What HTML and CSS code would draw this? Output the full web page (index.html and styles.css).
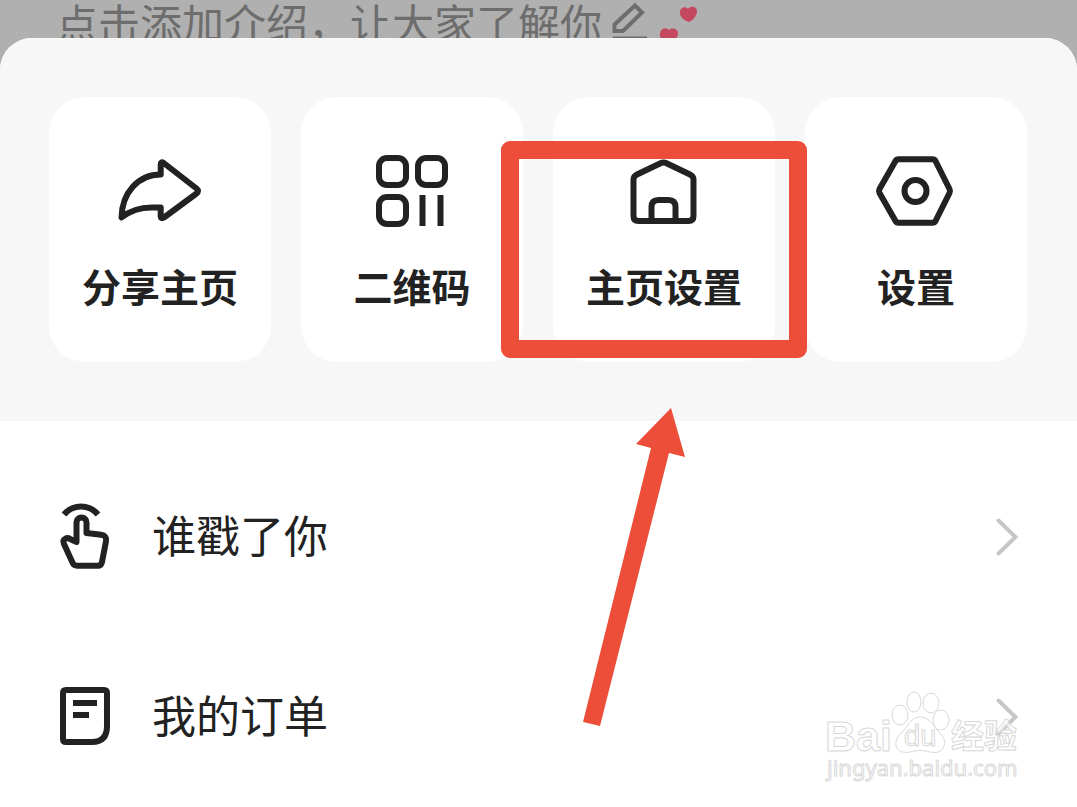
FILE: index.html
```html
<!DOCTYPE html>
<html lang="zh-CN">
<head>
<meta charset="utf-8">
<meta name="viewport" content="width=device-width, initial-scale=1">
<title>主页设置</title>
<link rel="stylesheet" href="styles.css">
</head>
<body>
<header class="intro">
  <span class="intro-text">点击添加介绍，让大家了解你</span>
  <svg class="intro-icons" viewBox="0 0 92 44" aria-hidden="true">
    <path class="pencil" d="M4.500 24.500 25 5.500 32 12.500 13 31H4.500Z"/>
    <path class="pencil" d="M3 38.500H37"/>
    <path class="heart" d="M79 22c-6-2-10-6-9-11 1-4 6-5 8-2 3-4 9-2 9 2 0 5-4 9-8 11z"/>
    <path class="heart" d="M59 44c-6-2-10-6-9-11 1-5 6-6 9-3 3-3 9-1 9 3 0 5-4 9-9 11z"/>
  </svg>
</header>
<main class="sheet">
  <ul class="cards">
    <li class="card-item">
      <button class="card" type="button">
        <svg class="card-icon" viewBox="0 0 88 72" aria-hidden="true">
          <path d="M44.700 19.500V9.500q0-3.500 3-1.500L80.500 33.500q3 2.500 0 5L48 62.500q-3.300 2-3.300-1.500V52.500H38C25 52 15 55 5.500 62.500 6 38 22 19.500 44.700 19.500Z"/>
        </svg>
        <span class="card-label">分享主页</span>
      </button>
    </li>
    <li class="card-item">
      <button class="card" type="button">
        <svg class="card-icon" viewBox="0 0 88 72" aria-hidden="true">
          <rect x="11" y="3" width="27" height="27" rx="8"/>
          <rect x="50" y="3" width="27" height="27" rx="8"/>
          <rect x="11" y="42" width="27" height="27" rx="8"/>
          <path d="M54.500 40V71M72.500 40V71"/>
        </svg>
        <span class="card-label">二维码</span>
      </button>
    </li>
    <li class="card-item marked">
      <button class="card" type="button">
        <svg class="card-icon" viewBox="0 0 88 72" aria-hidden="true">
          <path d="M46 8 70 19.500q3.500 1.700 3.500 5V61q0 5-5 5h-50q-5 0-5-5V24.500q0-3.300 3.500-5L41 8q2.500-1.200 5 0Z"/>
          <path d="M31.500 66V52q0-7 7-7h10q7 0 7 7v14"/>
        </svg>
        <span class="card-label">主页设置</span>
      </button>
      <span class="mark-box"></span>
      <svg class="mark-arrow" viewBox="0 0 104 320" aria-hidden="true">
        <path d="M89 0 54 36 69 40 1 314 18 318 87 45 103 49Z"/>
      </svg>
    </li>
    <li class="card-item">
      <button class="card" type="button">
        <svg class="card-icon" viewBox="0 0 88 72" aria-hidden="true">
          <path d="M26.500 4.300h34q2 0 3 1.700L77.500 34q1 2 0 4L63.500 66q-1 1.700-3 1.700h-34q-2 0-3-1.700L7.500 38q-1-2 0-4L23.500 6q1-1.700 3-1.700Z"/>
          <circle cx="43.500" cy="36" r="11"/>
        </svg>
        <span class="card-label">设置</span>
      </button>
    </li>
  </ul>
  <ul class="rows">
    <li>
      <button class="row" type="button">
        <svg class="row-icon" viewBox="0 0 54 72" aria-hidden="true">
          <path d="M6 13.500A22 22 0 0 1 40 13.500"/>
          <path d="M18.500 41V21.500a5 5 0 0 1 10 0V32L43 33.700q6 .8 5 6.500L44 61q-.8 3.700-4 3.700H19q-3 0-4.300-2.700L6 43q-1.500-3.500 1-5 3-2 6 .5Z"/>
        </svg>
        <span class="row-label">谁戳了你</span>
        <svg class="chevron" viewBox="0 0 24 40" aria-hidden="true"><path d="M3.500 3.500 20.500 20 3.500 36.500"/></svg>
      </button>
    </li>
    <li>
      <button class="row" type="button">
        <svg class="row-icon" viewBox="0 0 54 72" aria-hidden="true">
          <path d="M8 9h38q3 0 3 3v33q0 16-15 16H8q-3 0-3-3V12q0-3 3-3z"/>
          <path d="M15 22H39M15 34H31"/>
        </svg>
        <span class="row-label">我的订单</span>
        <svg class="chevron" viewBox="0 0 24 40" aria-hidden="true"><path d="M3.500 3.500 20.500 20 3.500 36.500"/></svg>
      </button>
    </li>
  </ul>
  <svg class="watermark" viewBox="0 0 200 98" role="img" aria-label="Baidu 经验">
    <text class="wm-bai" x="1" y="63">Bai</text>
    <ellipse cx="76" cy="27" rx="8" ry="10"/>
    <ellipse cx="90" cy="14" rx="7" ry="10"/>
    <ellipse cx="107" cy="15" rx="8" ry="10"/>
    <ellipse cx="117" cy="32" rx="8" ry="10"/>
    <path d="M96 29c9 0 12 7 17 13 6 6 9 10 7 16-2 7-9 7-14 6-7-2-13-2-20 0-6 1-12 0-14-6-1-6 2-10 8-16 5-6 8-13 16-13z"/>
    <text class="wm-du" x="80" y="58">du</text>
    <text class="wm-cn" x="127" y="60">经验</text>
    <text class="wm-url" x="3" y="88">jingyan.baidu.com</text>
  </svg>
</main>
</body>
</html>
```
FILE: styles.css
```css
* {
  box-sizing: border-box;
}

body {
  margin: 0;
  background: #b0b0b0;
  color: #222;
  font-family: "Noto Sans CJK SC", sans-serif;
}

ul {
  list-style: none;
  margin: 0;
  padding: 0;
}

button {
  border: 0;
  margin: 0;
  background: none;
  color: inherit;
  font: inherit;
  cursor: pointer;
}

svg {
  display: block;
  flex: none;
  fill: none;
}

.intro {
  display: flex;
  gap: 8px;
  height: 38px;
  padding-left: 56px;
  overflow: hidden;
  color: #6d6d6d;
}

.intro-text {
  font-size: 42px;
  line-height: 44px;
  white-space: nowrap;
}

.intro-icons {
  width: 92px;
  height: 44px;
}

.pencil {
  stroke: #6d6d6d;
  stroke-width: 4;
}

.heart {
  fill: #c4485f;
}

.sheet {
  position: relative;
  overflow: hidden;
  border-radius: 32px 32px 0 0;
  background: #fff;
}

.cards {
  display: grid;
  grid-template-columns: repeat(4, 1fr);
  gap: 30px;
  padding: 59px 50px 59px 49px;
  background: #f7f7f7;
}

.card {
  display: flex;
  flex-direction: column;
  align-items: center;
  gap: 30px;
  width: 100%;
  padding: 58px 0 49px;
  border-radius: 36px;
  background: #fff;
}

.card-icon {
  width: 88px;
  height: 72px;
  stroke: #222;
  stroke-width: 6;
  stroke-linejoin: round;
}

.card-label {
  font-size: 39px;
  font-weight: 700;
  line-height: 56px;
  white-space: nowrap;
}

.marked {
  position: relative;
  z-index: 1;
}

.mark-box {
  position: absolute;
  top: 44px;
  right: -32px;
  bottom: 4px;
  left: -52px;
  border: 18px solid #ec4e39;
  border-radius: 9px;
  pointer-events: none;
}

.mark-arrow {
  position: absolute;
  top: 311px;
  left: 29px;
  width: 104px;
  height: 320px;
  fill: #ec4e39;
  pointer-events: none;
}

.rows {
  padding-top: 26px;
}

.row {
  display: flex;
  align-items: center;
  gap: 40px;
  width: 100%;
  height: 180px;
  padding: 0 58px;
  text-align: left;
}

.row-icon {
  width: 54px;
  height: 72px;
  stroke: #222;
  stroke-width: 6;
  stroke-linejoin: round;
}

.row-label {
  flex: 1;
  padding-bottom: 6px;
  font-size: 44px;
  line-height: 64px;
}

.chevron {
  width: 24px;
  height: 40px;
  stroke: #c6c6c6;
  stroke-width: 4;
  stroke-linecap: round;
}

.watermark {
  position: absolute;
  right: 53px;
  bottom: 21px;
  width: 200px;
  height: 98px;
  fill: rgba(255, 255, 255, 0.7);
  stroke: #d8d8d8;
  stroke-width: 1;
  pointer-events: none;
}

.wm-bai {
  font: 700 43px "Liberation Sans", sans-serif;
}

.wm-du {
  font: 400 29px "Liberation Sans", sans-serif;
}

.wm-cn {
  font: 700 33px "Noto Sans CJK SC", sans-serif;
}

.wm-url {
  font: 400 22px "Noto Sans", sans-serif;
}
```
